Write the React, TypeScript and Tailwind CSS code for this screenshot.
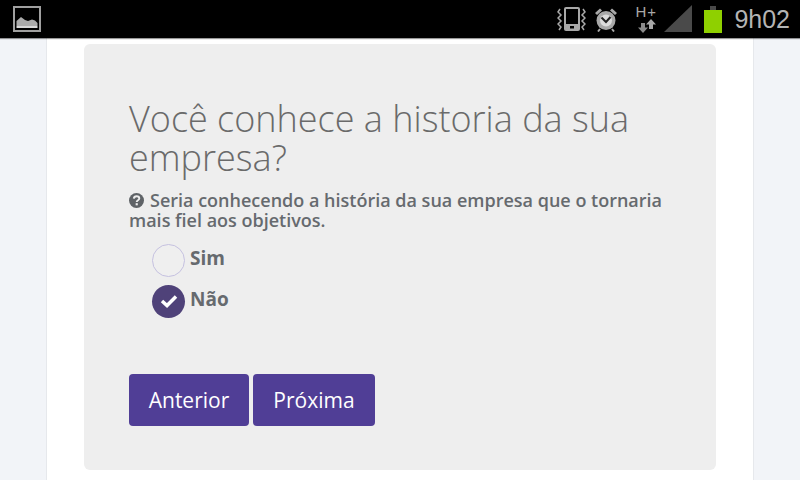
function StatusBar() {
  return (
    <div className="relative z-10 flex h-[38px] items-center justify-between bg-black pl-[13px] pr-[10px] shadow-[0_1px_1px_rgba(0,0,0,0.4)]">
      <svg width="28" height="26" viewBox="0 0 28 26">
        <rect x="1" y="1" width="26" height="24" fill="none" stroke="#a0a0a0" strokeWidth="2" />
        <path d="M3.500 20 L3.500 15 L8 11 L12 14 L15 15 L19 13.500 L22 14.500 L24.500 17 L24.500 20 Z" fill="#ababab" />
        <rect x="3.500" y="20" width="21" height="2" fill="#d8d8d8" />
      </svg>
      <div className="flex items-center">
        {/* vibrate */}
        <svg width="29" height="26" viewBox="0 0 29 26" className="mr-[8px]">
          <rect x="7" y="1" width="16" height="24" rx="2" fill="#a8a8a8" />
          <rect x="9" y="3" width="12" height="15" fill="#000" />
          <rect x="13" y="20" width="4" height="2.500" fill="#000" />
          <path d="M3 3 L1 6 L4 9 L1 12 L4 15 L1 18 L4 21 L2 24" fill="none" stroke="#a8a8a8" strokeWidth="1.500" />
          <path d="M26 3 L28 6 L25 9 L28 12 L25 15 L28 18 L25 21 L27 24" fill="none" stroke="#a8a8a8" strokeWidth="1.500" />
        </svg>
        {/* alarm */}
        <svg width="24" height="25" viewBox="0 0 24 25" className="mr-[17px]">
          <circle cx="12" cy="13.500" r="9.500" fill="#a8a8a8" />
          <circle cx="12" cy="13.500" r="6" fill="#dcdcdc" />
          <path d="M7.500 10.500 L12 15 L16.500 10" fill="none" stroke="#222" strokeWidth="2" />
          <path d="M1 6 L6 1.500 L8 3.500 L3 8 Z M23 6 L18 1.500 L16 3.500 L21 8 Z" fill="#a8a8a8" />
          <path d="M6 22 L4 24.500 M18 22 L20 24.500" stroke="#a8a8a8" strokeWidth="2" />
        </svg>
        {/* network */}
        <div className="relative mr-[8px] h-[28px] w-[21px]">
          <span className="absolute left-0 top-[-1px] font-['Liberation_Sans',sans-serif] text-[15px] leading-[16px] tracking-[1px] text-[#a8a8a8]">H+</span>
          <svg width="18" height="14" viewBox="0 0 18 14" className="absolute left-[3px] top-[14px]">
            <path d="M5 14 L0 8.500 L3 8.500 L3 4 L7 4 L7 8.500 L10 8.500 Z" fill="#8a8a8a" />
            <path d="M13 0 L18 5.500 L15 5.500 L15 10 L11 10 L11 5.500 L8 5.500 Z" fill="#a8a8a8" />
          </svg>
        </div>
        <svg width="29" height="28" viewBox="0 0 29 28" className="mr-[11px]">
          <path d="M0 27 L28 0 L28 27 Z" fill="#4a4a4a" />
        </svg>
        {/* battery */}
        <div className="mr-[12px] flex flex-col items-center">
          <div className="h-[4px] w-[6px] bg-[#4a4a4a]" />
          <div className="h-[23px] w-[18px] bg-[#8fd000]" />
        </div>
        <span className="font-['Liberation_Sans',sans-serif] text-[25px] leading-[28px] text-[#b4b4b4]">9h02</span>
      </div>
    </div>
  );
}

export default function App() {
  return (
    <div className="flex h-[480px] w-[800px] flex-col overflow-hidden bg-[#f2f4f8] font-['Open_Sans',sans-serif]">
      <StatusBar />
      <div className="mx-[46px] flex-1 border-x border-x-[#e6e8ec] bg-white px-[37px] pt-[6px]">
        <div className="h-[426px] rounded-[6px] bg-[#eeeeee] pl-[45px] pr-[40px] pt-[55px]">
          <h1 className="text-[36px] font-light leading-[39px] text-[#6a6a6a]">Você conhece a historia da sua empresa?</h1>
          <p className="mt-[13px] text-[18px] font-semibold leading-[20px] text-[#666a6e]">
            <svg width="15" height="15" viewBox="0 0 14 14" className="mr-[6px] inline-block align-[-1px]">
              <circle cx="7" cy="7" r="7" fill="#5f6367" />
              <path d="M4.500 5.300 C4.700 3.700 5.700 3 7 3 C8.500 3 9.600 3.900 9.600 5.100 C9.600 6.700 7.200 6.800 7.200 8.400" fill="none" stroke="#eeeeee" strokeWidth="1.800" />
              <rect x="6.200" y="9.500" width="2" height="2" fill="#eeeeee" />
            </svg>
            Seria conhecendo a história da sua empresa que o tornaria mais fiel aos objetivos.
          </p>
          <div className="mt-[14px] flex flex-col gap-[9px] pl-[23px]">
            <label className="flex h-[32px] items-center gap-[5px]">
              <span className="h-[33px] w-[33px] rounded-full border-[1.5px] border-[#c5c1e0] bg-[#efefef]" />
              <span className="mt-[-4px] text-[19px] font-bold text-[#666a6e]">Sim</span>
            </label>
            <label className="flex h-[32px] items-center gap-[5px]">
              <span className="flex h-[33px] w-[33px] items-center justify-center rounded-full bg-[#4f4279]">
                <svg width="18" height="14" viewBox="0 0 18 14">
                  <path d="M2 7 L7 11.500 L16 2.500" fill="none" stroke="#fff" strokeWidth="3.500" />
                </svg>
              </span>
              <span className="mt-[-4px] text-[19px] font-bold text-[#666a6e]">Não</span>
            </label>
          </div>
          <div className="mt-[57px] flex gap-[4px]">
            <button className="h-[52px] w-[120px] rounded-[4px] bg-[#503e96] pt-[2px] text-[21px] text-white">Anterior</button>
            <button className="h-[52px] w-[122px] rounded-[4px] bg-[#503e96] pt-[2px] text-[21px] text-white">Próxima</button>
          </div>
        </div>
      </div>
    </div>
  );
}
